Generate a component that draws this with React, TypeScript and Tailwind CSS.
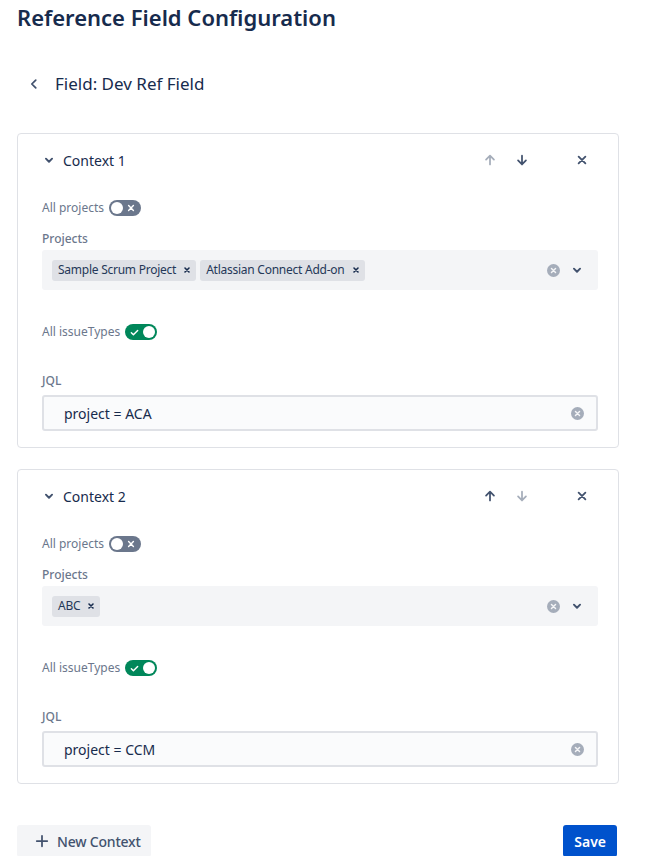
import React from "react";

const ArrowUp = ({ className }: { className: string }) => (
  <svg viewBox="0 0 16 16" className={className} fill="none" stroke="currentColor" strokeWidth="2" strokeLinecap="round" strokeLinejoin="round">
    <path d="M8 13V3M3.5 7.5L8 3l4.5 4.5" />
  </svg>
);

const ArrowDown = ({ className }: { className: string }) => (
  <svg viewBox="0 0 16 16" className={className} fill="none" stroke="currentColor" strokeWidth="2" strokeLinecap="round" strokeLinejoin="round">
    <path d="M8 3v10M3.5 8.5L8 13l4.5-4.5" />
  </svg>
);

const Cross = ({ className }: { className: string }) => (
  <svg viewBox="0 0 16 16" className={className} fill="none" stroke="currentColor" strokeWidth="2.4" strokeLinecap="round">
    <path d="M3.5 3.5l9 9M12.5 3.5l-9 9" />
  </svg>
);

const ChevronDown = ({ className }: { className: string }) => (
  <svg viewBox="0 0 16 16" className={className} fill="none" stroke="currentColor" strokeWidth="2.2" strokeLinecap="round" strokeLinejoin="round">
    <path d="M4.5 6.5L8 10l3.5-3.5" />
  </svg>
);

const ClearCircle = ({ size }: { size: string }) => (
  <svg viewBox="0 0 16 16" className={size}>
    <circle cx="8" cy="8" r="8" fill="#a5adba" />
    <path d="M5.5 5.5l5 5M10.5 5.5l-5 5" stroke="#f4f5f7" strokeWidth="1.8" strokeLinecap="round" />
  </svg>
);

const Toggle = ({ on }: { on: boolean }) =>
  on ? (
    <span className="relative inline-flex h-4 w-8 items-center rounded-full bg-[#00875a]">
      <svg viewBox="0 0 10 10" className="absolute left-[5px] h-[9px] w-[9px]" fill="none" stroke="white" strokeWidth="1.6" strokeLinecap="round" strokeLinejoin="round">
        <path d="M1.5 5.2l2.3 2.3L8.5 2.8" />
      </svg>
      <span className="absolute right-[2px] h-3 w-3 rounded-full bg-white" />
    </span>
  ) : (
    <span className="relative inline-flex h-4 w-8 items-center rounded-full bg-[#6b778c]">
      <span className="absolute left-[2px] h-3 w-3 rounded-full bg-white" />
      <svg viewBox="0 0 10 10" className="absolute right-[6px] h-[8px] w-[8px]" fill="none" stroke="white" strokeWidth="1.8" strokeLinecap="round">
        <path d="M2 2l6 6M8 2L2 8" />
      </svg>
    </span>
  );

const Tag = ({ label }: { label: string }) => (
  <span className="flex h-[21px] items-center gap-[7px] rounded-[3px] bg-[#dfe1e6] pl-[6px] pr-[5px] text-[12px] tracking-[-0.25px] text-[#253858]">
    {label}
    <svg viewBox="0 0 10 10" className="h-[8px] w-[8px]" fill="none" stroke="#172b4d" strokeWidth="2" strokeLinecap="round">
      <path d="M2.5 2.5l5 5M7.5 2.5l-5 5" />
    </svg>
  </span>
);

type Ctx = {
  name: string;
  projects: string[];
  jql: string;
  canUp: boolean;
  canDown: boolean;
};

const ContextCard = ({ ctx }: { ctx: Ctx }) => (
  <div className="rounded-[4px] border border-[#dfe1e6] pl-6 pr-5 pt-[10px] pb-4">
    <div className="flex h-8 items-center">
      <ChevronDown className="h-[14px] w-[14px] text-[#42526e]" />
      <span className="ml-[7px] text-[14px] text-[#172b4d]">{ctx.name}</span>
      <div className="ml-auto flex items-center">
        <ArrowUp className={`h-[14px] w-[14px] ${ctx.canUp ? "text-[#42526e]" : "text-[#a5adba]"}`} />
        <ArrowDown className={`ml-[18px] h-[14px] w-[14px] ${ctx.canDown ? "text-[#42526e]" : "text-[#a5adba]"}`} />
        <Cross className="ml-[47px] mr-[10px] h-[12px] w-[12px] text-[#42526e]" />
      </div>
    </div>

    <div className="mt-6 flex h-4 items-center gap-[5px]">
      <span className="text-[12px] text-[#6b778c]">All projects</span>
      <Toggle on={false} />
    </div>

    <div className="mt-[15px] text-[12px] leading-4 font-medium text-[#6b778c]">Projects</div>
    <div className="mt-[3px] flex h-10 items-center rounded-[3px] bg-[#f4f5f7] pl-[10px] pr-[14px]">
      <div className="flex gap-1">
        {ctx.projects.map((p) => (
          <Tag key={p} label={p} />
        ))}
      </div>
      <div className="ml-auto flex items-center gap-[10px]">
        <ClearCircle size="h-[13px] w-[13px]" />
        <ChevronDown className="h-[14px] w-[14px] text-[#42526e]" />
      </div>
    </div>

    <div className="mt-[34px] flex h-4 items-center gap-[5px]">
      <span className="text-[12px] text-[#6b778c]">All issueTypes</span>
      <Toggle on={true} />
    </div>

    <div className="mt-[33px] text-[12px] leading-4 font-medium text-[#6b778c]">JQL</div>
    <div className="mt-[6px] flex h-9 items-center rounded-[3px] border-2 border-[#dfe1e6] bg-[#fafbfc] pl-5 pr-[12px]">
      <span className="text-[14px] text-[#172b4d]">{ctx.jql}</span>
      <span className="ml-auto">
        <ClearCircle size="h-[13px] w-[13px]" />
      </span>
    </div>
  </div>
);

const contexts: Ctx[] = [
  {
    name: "Context 1",
    projects: ["Sample Scrum Project", "Atlassian Connect Add-on"],
    jql: "project = ACA",
    canUp: false,
    canDown: true,
  },
  {
    name: "Context 2",
    projects: ["ABC"],
    jql: "project = CCM",
    canUp: true,
    canDown: false,
  },
];

export default function App() {
  return (
    <div className="min-h-[856px] bg-white px-[17px] pt-[3px] font-['Noto_Sans',sans-serif]">
      <h1 className="h-7 text-[22px] leading-7 font-semibold text-[#172b4d]">Reference Field Configuration</h1>

      <div className="mt-[39px] flex h-7 items-center">
        <svg viewBox="0 0 16 16" className="ml-[10px] h-[14px] w-[14px]" fill="none" stroke="#42526e" strokeWidth="2" strokeLinecap="round" strokeLinejoin="round">
          <path d="M10 3.5L5.5 8l4.5 4.5" />
        </svg>
        <span className="ml-[14px] text-[17px] text-[#172b4d]">Field: Dev Ref Field</span>
      </div>

      <div className="mt-[35px] mr-[12px] flex flex-col gap-[21px]">
        {contexts.map((c) => (
          <ContextCard key={c.name} ctx={c} />
        ))}
      </div>

      <div className="mt-[41px] mr-[14px] flex items-center justify-between">
        <button className="flex h-8 items-center gap-[8px] rounded-[3px] bg-[#f4f5f7] pl-[18px] pr-[10px] text-[14px] font-medium tracking-[-0.2px] text-[#42526e]">
          <svg viewBox="0 0 16 16" className="h-[14px] w-[14px]" fill="none" stroke="#42526e" strokeWidth="2" strokeLinecap="round">
            <path d="M8 2v12M2 8h12" />
          </svg>
          New Context
        </button>
        <button className="h-8 rounded-[3px] bg-[#0052cc] px-[11px] text-[14px] font-semibold text-white">Save</button>
      </div>
    </div>
  );
}
